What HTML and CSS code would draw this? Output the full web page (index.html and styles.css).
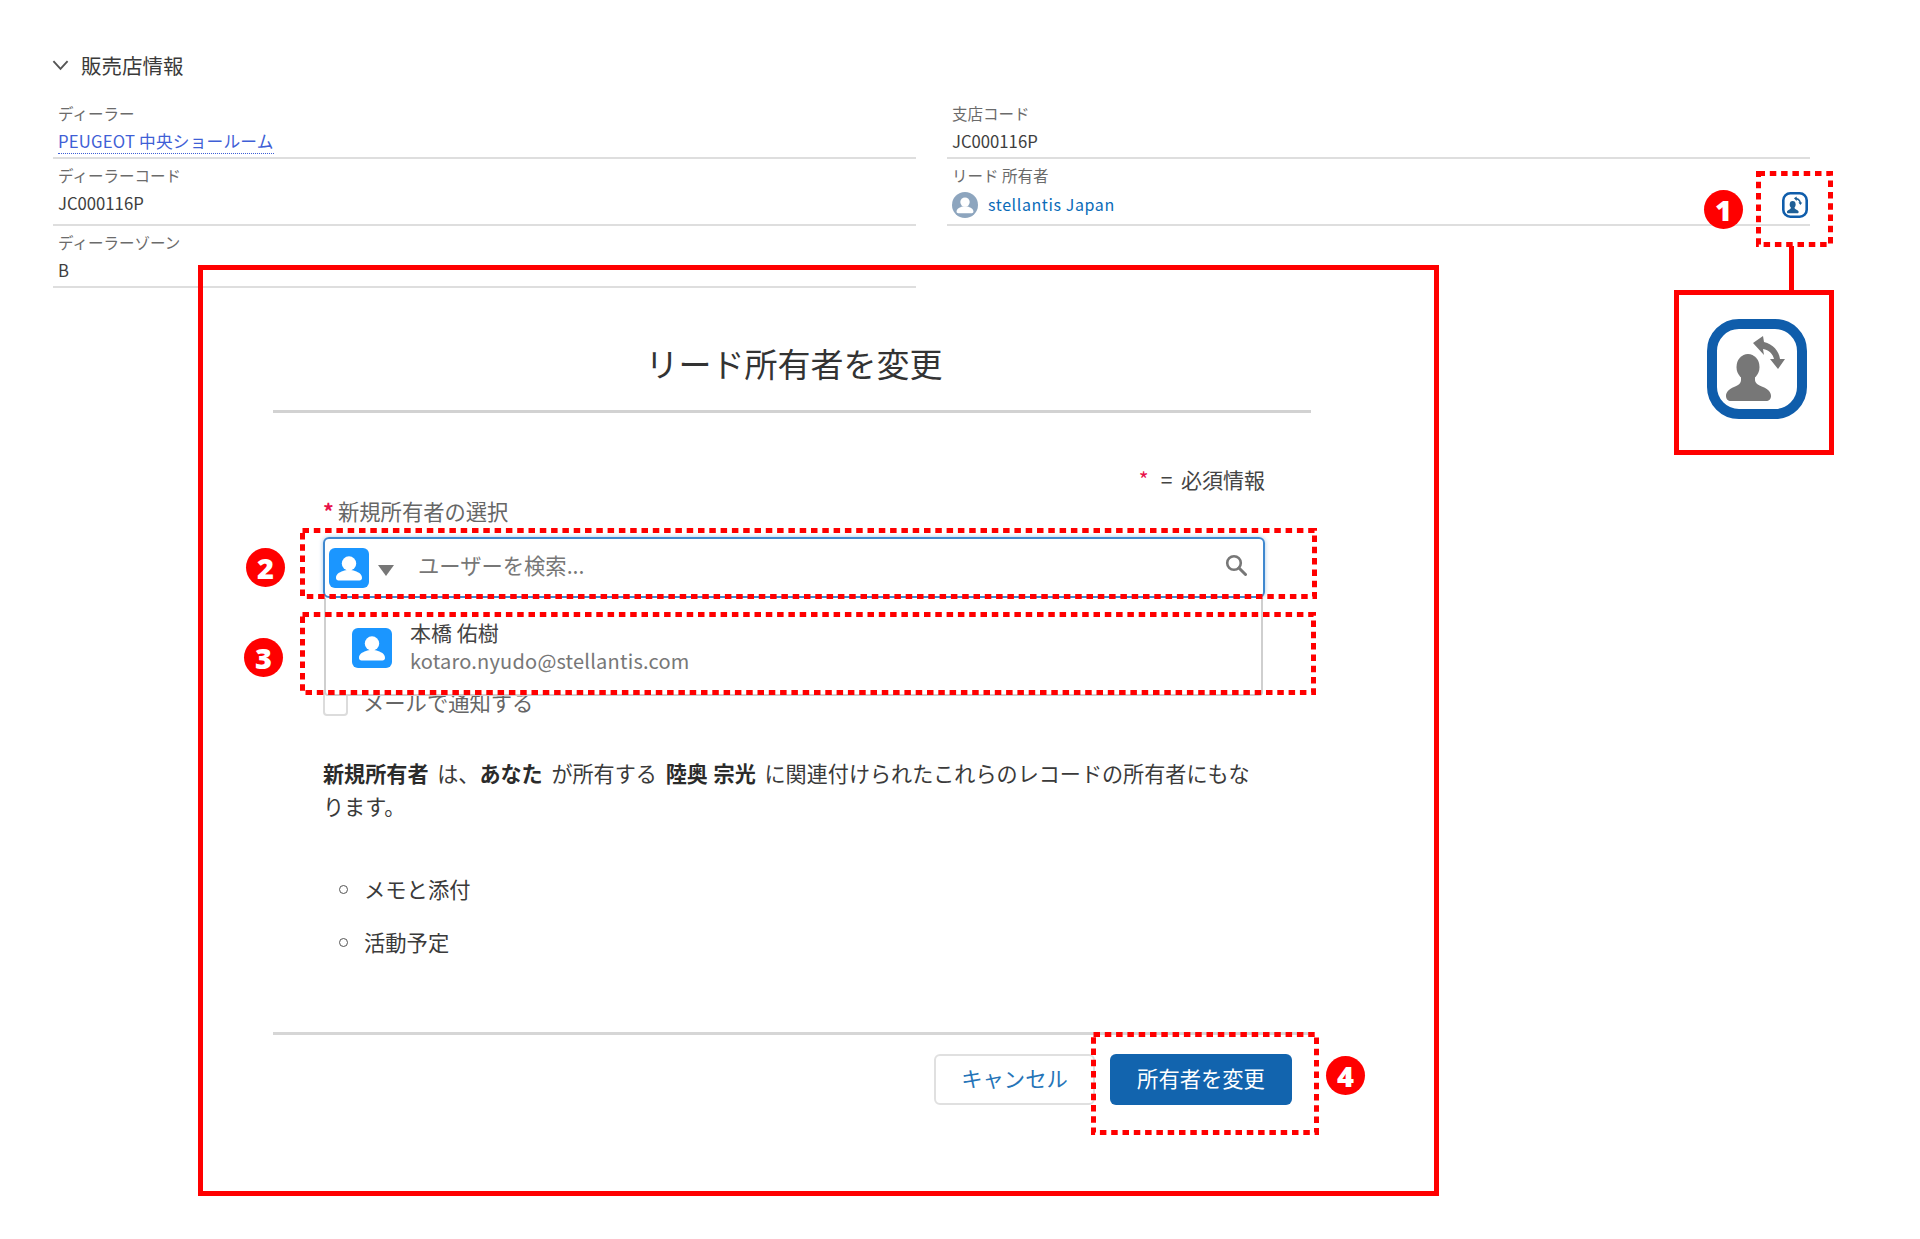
FILE: index.html
```html
<!DOCTYPE html>
<html lang="ja">
<head>
<meta charset="utf-8">
<title>リード所有者を変更</title>
<link rel="stylesheet" href="styles.css">
</head>
<body>
<svg class="defs" width="0" height="0" aria-hidden="true">
  <symbol id="change-owner" viewBox="0 0 100 100">
    <rect x="5" y="5" width="90" height="90" rx="27" fill="#fff" stroke="#0f5dab" stroke-width="10"/>
    <g fill="currentColor">
      <ellipse cx="41" cy="48" rx="11.5" ry="13"/>
      <path d="M34 58h14v3c0 3 3 5 8 7 5 2 8 5 8 9 0 3-2 5-5 5H24c-3 0-5-2-5-5 0-4 3-7 8-9 5-2 7-4 7-7z"/>
      <path d="M46 24l10-7 1 6c9 2 15 9 16 17l5 0-7 10-8-10 4 0c-1-5-5-9-11-10l1 6z"/>
    </g>
  </symbol>
  <symbol id="person" viewBox="0 0 40 40">
    <circle cx="20" cy="15.5" r="7.2" fill="#fff"/>
    <path d="M7 30c0-4 3-5.500 7-7 2-.8 3-1 6-1s4 .2 6 1c4 1.500 7 3 7 7 0 1.500-1 2.500-2.500 2.500h-21C8 32.500 7 31.500 7 30z" fill="#fff"/>
  </symbol>
</svg>

<main class="page">
  <section class="dealer">
    <h2 class="section-head">
      <svg class="chevron" viewBox="0 0 18 12"><path d="M1.500 2l7.500 8 7.500-8" fill="none" stroke="#555" stroke-width="2"/></svg>
      <span>販売店情報</span>
    </h2>
    <div class="fields">
      <div class="field">
        <div class="field-label">ディーラー</div>
        <div class="field-value"><a class="dealer-link">PEUGEOT 中央ショールーム</a></div>
      </div>
      <div class="field">
        <div class="field-label">支店コード</div>
        <div class="field-value">JC000116P</div>
      </div>
      <div class="field">
        <div class="field-label">ディーラーコード</div>
        <div class="field-value">JC000116P</div>
      </div>
      <div class="field">
        <div class="field-label">リード 所有者</div>
        <div class="field-value owner">
          <span class="owner-avatar"><svg viewBox="0 0 40 40"><use href="#person"/></svg></span>
          <a class="owner-link">stellantis Japan</a>
          <svg class="owner-action"><use href="#change-owner"/></svg>
        </div>
      </div>
      <div class="field">
        <div class="field-label">ディーラーゾーン</div>
        <div class="field-value">B</div>
      </div>
    </div>
  </section>

  <section class="dialog">
    <h1 class="dialog-title">リード所有者を変更</h1>
    <div class="dialog-body">
      <p class="required-note"><span class="star">*</span><span class="required-text">= 必須情報</span></p>
      <label class="owner-label"><span class="star">*</span>新規所有者の選択</label>
      <div class="lookup">
        <span class="tile"><svg viewBox="0 0 40 40"><use href="#person"/></svg></span>
        <span class="caret"></span>
        <span class="placeholder">ユーザーを検索...</span>
        <svg class="search" viewBox="0 0 22 22"><circle cx="9" cy="9" r="6.800" fill="none" stroke="#777" stroke-width="2.600"/><path d="M14 14l6.500 6.500" stroke="#777" stroke-width="3" stroke-linecap="round"/></svg>
        <div class="suggestions">
          <span class="tile"><svg viewBox="0 0 40 40"><use href="#person"/></svg></span>
          <div class="suggestion-text">
            <div class="suggestion-name">本橋 佑樹</div>
            <div class="suggestion-mail">kotaro.nyudo@stellantis.com</div>
          </div>
        </div>
      </div>
      <div class="notify">
        <span class="checkbox"></span>
        <span>メールで通知する</span>
      </div>
      <p class="notice"><b>新規所有者</b> は、<b>あなた</b> が所有する <b class="tight">陸奥 宗光</b> に関連付けられたこれらのレコードの所有者にもなります。</p>
      <ul class="records">
        <li>メモと添付</li>
        <li>活動予定</li>
      </ul>
    </div>
    <div class="dialog-foot">
      <button class="btn btn-cancel">キャンセル</button>
      <button class="btn btn-primary">所有者を変更</button>
    </div>
  </section>

  <svg class="mark mark-1"><rect x="2.500" y="2.500" width="72" height="71"/></svg>
  <svg class="mark mark-2"><rect x="2.500" y="2.500" width="1012" height="66"/></svg>
  <svg class="mark mark-3"><rect x="2.500" y="2.500" width="1011" height="78"/></svg>
  <svg class="mark mark-4"><rect x="2.500" y="2.500" width="223" height="98"/></svg>
  <div class="connector"></div>
  <div class="zoom-box"><svg class="zoom-icon"><use href="#change-owner"/></svg></div>
  <span class="badge badge-1">1</span>
  <span class="badge badge-2">2</span>
  <span class="badge badge-3">3</span>
  <span class="badge badge-4">4</span>
</main>
</body>
</html>
```
FILE: styles.css
```css
* { box-sizing: border-box; }
html, body { margin: 0; padding: 0; background: #fff; }
body { font-family: "Noto Sans CJK JP", "Noto Sans", sans-serif; color: #3a3a3a; }
.defs { position: absolute; }
.page { position: relative; width: 1920px; height: 1239px; overflow: hidden; padding-top: 49px; }
.dealer { padding: 0 110px 0 53px; }
.section-head { display: flex; align-items: center; gap: 12px; height: 32px; margin: 0 0 16px -1px; font-size: 20.5px; font-weight: 400; line-height: 32px; color: #3a3a3a; }
.chevron { width: 17px; height: 12px; }
.fields { display: grid; grid-template-columns: 863px 863px; column-gap: 31px; }
.field { min-height: 62px; padding: 6px 5px 2px; border-bottom: 2px solid #dedede; }
.field-label { font-size: 15.500px; line-height: 20px; color: #6b6b6b; }
.field-value { font-size: 16.700px; line-height: 28px; margin-top: 4px; color: #3e3e3e; }
.dealer-link { color: #3f5fd6; border-bottom: 1.500px dotted #3f5fd6; letter-spacing: 0.2px; }
.owner { display: flex; align-items: center; height: 35px; margin-top: 2px; }
.owner-avatar { width: 26px; height: 26px; border-radius: 50%; background: #8da5be; display: block; flex: none; }
.owner-avatar svg { display: block; width: 26px; height: 26px; }
.owner-link { margin: 0 0 2px 10px; color: #0a6bb8; letter-spacing: 0.6px; font-size: 16px; }
.owner-action { width: 26px; height: 26px; margin-left: auto; margin-right: -3px; color: #1f5f96; }

.dialog { position: absolute; left: 198px; top: 265px; width: 1241px; height: 931px; border: 5px solid #f00; padding: 69px 0 0 70px; }
.dialog-title { width: 1038px; height: 74px; margin: 0; padding: 0 0 23px 4px; border-bottom: 3px solid #d2d2d2; font-size: 33px; font-weight: 400; line-height: 48px; text-align: center; color: #333; }
.dialog-body { width: 992px; padding-left: 50px; color: #3a3a3a; font-size: 21.300px; }
.required-note { display: flex; justify-content: flex-end; gap: 12px; margin: 51px 0 0; line-height: 30px; font-size: 21px; color: #444; }
.required-text { word-spacing: 4px; }
.star { color: #e8114a; }
.owner-label { display: block; margin-top: 2px; line-height: 30px; color: #666; }
.owner-label .star { display: inline-block; width: 15px; font-weight: 700; }
.lookup { position: relative; display: flex; align-items: center; height: 61px; margin-top: 11px; padding-left: 4px; border: 2px solid #3f88cf; border-radius: 6px; box-shadow: 0 0 4px rgba(63,136,207,.45); }
.tile { display: block; flex: none; width: 40px; height: 40px; border-radius: 6px; background: #1b96ff; }
.tile svg { display: block; width: 40px; height: 40px; }
.caret { width: 0; height: 0; margin: 6px 0 0 9px; border-style: solid; border-width: 11px 8.500px 0; border-color: #777 transparent transparent; }
.placeholder { margin: 0 0 6px 24px; color: #777; }
.search { width: 22px; height: 22px; margin: 0 16px 5px auto; }
.suggestions { position: absolute; z-index: 1; left: -1px; right: 0; top: 59px; height: 98px; display: flex; align-items: center; gap: 18px; padding-left: 26px; background: #fff; border: solid #cfcfcf; border-width: 0 2px 2px; border-radius: 0 0 4px 4px; }
.suggestions .tile { margin-top: 3px; }
.suggestion-text { display: flex; flex-direction: column; }
.suggestion-name { font-size: 21px; line-height: 29px; color: #444; }
.suggestion-mail { font-size: 20px; line-height: 28px; color: #777; letter-spacing: 0.2px; }
.notify { display: flex; align-items: center; gap: 15px; height: 30px; margin-top: 88px; color: #666; }
.checkbox { width: 25px; height: 25px; margin-top: 4px; border: 2px solid #dcdcdc; border-radius: 4px; }
.notice { margin: 41px 0 0; line-height: 33px; color: #3a3a3a; width: 942px; font-size: 21.100px; word-spacing: 4px; }
.notice b { font-weight: 700; color: #2b2b2b; }
.notice .tight { word-spacing: 1px; }
.records { list-style: none; margin: 49px 0 0; padding: 0 0 0 41px; display: flex; flex-direction: column; gap: 20px; line-height: 33px; }
.records li { position: relative; }
.records li::before { content: ""; position: absolute; left: -25px; top: 13px; width: 7px; height: 7px; border: 1.500px solid #555; border-radius: 50%; }
.dialog-foot { display: flex; justify-content: flex-end; gap: 15px; width: 1038px; height: 82px; margin-top: 74px; padding: 19px 19px 0 0; border-top: 3px solid #d6d6d6; }
.btn { height: 51px; border-radius: 6px; font: inherit; font-size: 21.300px; line-height: 30px; padding: 0 0 3px; }
.btn-cancel { width: 161px; background: #fff; color: #2574b8; border: 2px solid #e0e0e0; }
.btn-primary { width: 182px; background: #1264ae; color: #fff; border: 0; }

.mark { position: absolute; z-index: 2; fill: none; }
.mark rect { stroke: #f00; stroke-width: 5; stroke-dasharray: 6.500 4.800; }
.mark-1 { left: 1756px; top: 171px; width: 77px; height: 76px; }
.mark-2 { left: 300px; top: 528px; width: 1017px; height: 71px; }
.mark-3 { left: 300px; top: 612px; width: 1016px; height: 83px; }
.mark-4 { left: 1091px; top: 1032px; width: 228px; height: 103px; }
.connector { position: absolute; left: 1789px; top: 246px; width: 5px; height: 44px; background: #f00; }
.zoom-box { position: absolute; left: 1674px; top: 290px; width: 160px; height: 165px; border: 5px solid #f00; padding: 24px 0 0 28px; }
.zoom-icon { display: block; width: 100px; height: 100px; color: #777; }
.badge { position: absolute; z-index: 3; width: 39px; height: 39px; border-radius: 50%; background: #f00; color: #fff; font-family: "Open Sans", sans-serif; font-weight: 800; font-size: 29px; line-height: 39px; text-align: center; }
.badge-1 { left: 1704px; top: 190px; }
.badge-2 { left: 246px; top: 548px; }
.badge-3 { left: 244px; top: 638px; }
.badge-4 { left: 1326px; top: 1056px; }
```
